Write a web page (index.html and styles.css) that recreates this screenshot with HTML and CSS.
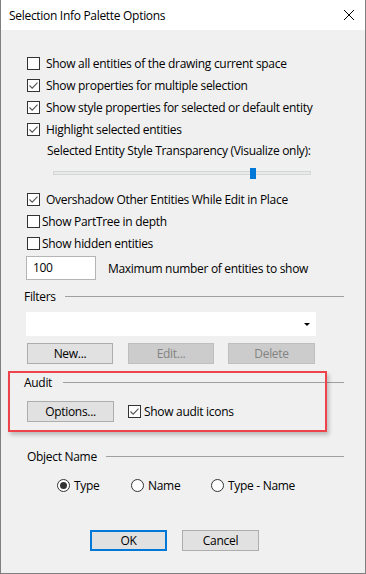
FILE: index.html
```html
<!DOCTYPE html>
<html>
<head>
<meta charset="utf-8">
<link rel="stylesheet" href="styles.css">
</head>
<body>
<div class="dialog">
  <div class="titlebar">
    <span class="title">Selection Info Palette Options</span>
    <svg class="close" width="12" height="12" viewBox="0 0 12 12"><path d="M1 1L11 11M11 1L1 11" stroke="#000" stroke-width="1" fill="none"/></svg>
  </div>
  <div class="content">
    <div class="check-row"><span class="box"></span><span>Show all entities of the drawing current space</span></div>
    <div class="check-row"><span class="box checked"><svg viewBox="0 0 11 11"><path d="M1.5 5.5L4.2 8.2L9.5 2.7" stroke="#555" stroke-width="1.1" fill="none"/></svg></span><span>Show properties for multiple selection</span></div>
    <div class="check-row"><span class="box checked"><svg viewBox="0 0 11 11"><path d="M1.5 5.5L4.2 8.2L9.5 2.7" stroke="#555" stroke-width="1.1" fill="none"/></svg></span><span>Show style properties for selected or default entity</span></div>
    <div class="check-row"><span class="box checked"><svg viewBox="0 0 11 11"><path d="M1.5 5.5L4.2 8.2L9.5 2.7" stroke="#555" stroke-width="1.1" fill="none"/></svg></span><span>Highlight selected entities</span></div>
    <div class="slider-label">Selected Entity Style Transparency (Visualize only):</div>
    <div class="slider"><div class="track"><span class="thumb"></span></div></div>
    <div class="check-row"><span class="box checked"><svg viewBox="0 0 11 11"><path d="M1.5 5.5L4.2 8.2L9.5 2.7" stroke="#555" stroke-width="1.1" fill="none"/></svg></span><span>Overshadow Other Entities While Edit in Place</span></div>
    <div class="check-row tight"><span class="box"></span><span>Show PartTree in depth</span></div>
    <div class="check-row tight"><span class="box"></span><span>Show hidden entities</span></div>
    <div class="input-row"><div class="num-input">100</div><span>Maximum number of entities to show</span></div>

    <div class="group-header g-filters"><span>Filters</span><span class="line"></span></div>
    <div class="dropdown"><span class="arrow"></span></div>
    <div class="btn-row">
      <div class="btn">New...</div>
      <div class="btn disabled">Edit...</div>
      <div class="btn disabled wide">Delete</div>
    </div>

    <div class="group-header g-audit"><span>Audit</span><span class="line"></span></div>
    <div class="audit-row">
      <div class="btn">Options...</div>
      <div class="check-row audit-check"><span class="box checked"><svg viewBox="0 0 11 11"><path d="M1.5 5.5L4.2 8.2L9.5 2.7" stroke="#555" stroke-width="1.1" fill="none"/></svg></span><span>Show audit icons</span></div>
    </div>

    <div class="group-header g-object"><span>Object Name</span><span class="line"></span></div>
    <div class="radio-row">
      <div class="radio-item r1"><span class="radio on"></span><span>Type</span></div>
      <div class="radio-item r2"><span class="radio"></span><span>Name</span></div>
      <div class="radio-item"><span class="radio"></span><span>Type - Name</span></div>
    </div>

    <div class="footer">
      <div class="btn ok">OK</div>
      <div class="btn">Cancel</div>
    </div>
  </div>
  <div class="highlight"></div>
</div>
</body>
</html>
```
FILE: styles.css
```css
* { box-sizing: border-box; }
body {
  margin: 0;
  font-family: "Open Sans", "Noto Sans", sans-serif;
  font-size: 12px;
  letter-spacing: -0.3px;
  color: #000;
}
.dialog {
  position: relative;
  width: 366px;
  height: 574px;
  background: #f0f0f0;
  border: 1px solid #7f7f7f;
  border-top: none;
}
.titlebar {
  height: 30px;
  background: #fff;
  display: flex;
  align-items: center;
  justify-content: space-between;
  padding: 0 10px 0 8px;
}
.title { font-size: 12px; }
.close { display: block; margin-top: 0; }
.content {
  padding: 22px 21px 0 26px;
}
.check-row {
  height: 22px;
  display: flex;
  align-items: center;
  gap: 6px;
}
.check-row.tight { gap: 2px; }
.box {
  width: 13px;
  height: 13px;
  flex: none;
  border: 1px solid #333;
  background: #fff;
  display: flex;
  align-items: center;
  justify-content: center;
}
.box svg { width: 11px; height: 11px; display: block; }
.slider-label {
  height: 22px;
  line-height: 22px;
  padding-left: 20px;
}
.slider {
  height: 26px;
  padding-top: 9px;
}
.track {
  position: relative;
  margin-left: 26px;
  width: 258px;
  height: 4px;
  background: #e7eaea;
  border: 1px solid #d6d6d6;
}
.thumb {
  position: absolute;
  left: 196px;
  top: -4px;
  width: 6px;
  height: 11px;
  background: #0078d7;
}
.input-row {
  margin-top: 2px;
  height: 24px;
  display: flex;
  align-items: center;
}
.num-input {
  margin-left: -1px;
  width: 70px;
  height: 24px;
  background: #fff;
  border: 1px solid #b4b4b4;
  padding-left: 6px;
  line-height: 22px;
  margin-right: 12px;
}
.group-header {
  height: 16px;
  display: flex;
  align-items: center;
  margin-left: -3px;
}
.group-header .line {
  flex: 1;
  height: 1px;
  background: #a0a0a0;
}
.g-filters { margin-top: 8px; }
.g-filters .line { margin-left: 9px; }
.g-audit { margin-top: 10px; }
.g-audit .line { margin-left: 11px; }
.g-object { margin-top: 26px; margin-left: 0; }
.g-object .line { margin-left: 9px; }
.dropdown {
  position: relative;
  margin-top: 8px;
  margin-left: -1px;
  width: 290px;
  height: 24px;
  background: #fff;
}
.arrow {
  position: absolute;
  right: 6px;
  top: 11px;
  width: 0;
  height: 0;
  border-left: 3px solid transparent;
  border-right: 3px solid transparent;
  border-top: 3px solid #000;
}
.btn-row {
  margin-top: 7px;
  display: flex;
}
.btn-row .btn + .btn { margin-left: 15px; }
.btn-row .btn.wide { margin-left: 14px; }
.btn {
  width: 86px;
  height: 21px;
  background: #e1e1e1;
  border: 1px solid #adadad;
  display: flex;
  align-items: center;
  justify-content: center;
  flex: none;
}
.btn.wide { width: 87px; }
.btn.disabled {
  background: #cccccc;
  border-color: #bfbfbf;
  color: #838383;
}
.audit-row {
  margin-top: 10px;
  display: flex;
  align-items: center;
  gap: 14px;
}
.audit-row .btn { width: 87px; }
.check-row.audit-check { gap: 3px; }
.radio-row {
  margin-top: 11px;
  height: 20px;
  display: flex;
  align-items: center;
  padding-left: 30px;
}
.radio-item {
  display: flex;
  align-items: center;
  gap: 4px;
}
.radio-item.r1 { width: 74px; }
.radio-item.r2 { width: 80px; }
.radio {
  width: 13px;
  height: 13px;
  border: 1px solid #333;
  border-radius: 50%;
  background: #fff;
  display: flex;
  align-items: center;
  justify-content: center;
  flex: none;
}
.radio.on::after {
  content: "";
  width: 7px;
  height: 7px;
  border-radius: 50%;
  background: #333;
}
.footer {
  margin-top: 35px;
  display: flex;
  gap: 15px;
  padding-left: 63px;
}
.footer .btn { width: 77px; }
.btn.ok { border: 2px solid #0078d7; }
.highlight {
  position: absolute;
  left: 7px;
  top: 371px;
  width: 319px;
  height: 61px;
  border: 2px solid #ee434a;
  box-shadow: 2px 3px 4px rgba(0,0,0,0.22);
}
```
